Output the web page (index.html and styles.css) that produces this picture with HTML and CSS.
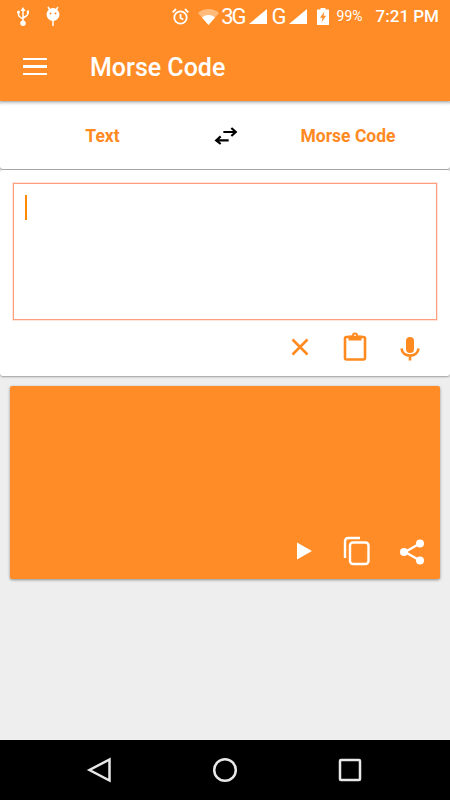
FILE: index.html
```html
<!DOCTYPE html>
<html lang="en">
<head>
  <meta charset="UTF-8">
  <meta name="viewport" content="width=device-width, initial-scale=1.0">
  <title>Morse Code</title>
  <link rel="stylesheet" href="styles.css">
</head>
<body>
  <div class="screen">
    <header class="app-header">
      <div class="status-bar">
        <svg class="status-usb" viewBox="0 0 12 19"><path d="M6 0 L8.500 4 H3.500 Z M1.500 3.500 A1.500 1.500 0 1 1 1.500 6.500 A1.500 1.500 0 1 1 1.500 3.500 Z M9.800 3.500 H12 V6.500 H9.800 Z M6 13.500 A2.700 2.700 0 1 1 6 19 A2.700 2.700 0 1 1 6 13.500 Z"/><path class="usb-line" d="M6 3 V15 M1.500 5 V7.500 Q1.500 9 3 10 L6 12 M10.800 5 V6.500 Q10.800 8 9.300 9 L6 11"/></svg>
        <svg class="status-droid" viewBox="0 0 14 19"><path class="usb-line" d="M2 0 L4 3 M12 0 L10 3 M7 12 V19"/><circle cx="7" cy="7.500" r="6.500"/><circle class="droid-eye" cx="4.500" cy="6.500" r="1"/><circle class="droid-eye" cx="9.500" cy="6.500" r="1"/></svg>
        <div class="status-right">
          <svg class="status-alarm" viewBox="0 0 17 17"><circle cx="8.500" cy="9.500" r="6.200"/><path d="M8.500 6 V10 L11.300 11.500 M0.700 4.300 L4 1 M16.300 4.300 L13 1"/></svg>
          <svg class="status-wifi" viewBox="0 0 21 17"><path class="wifi-back" d="M0 5 A15.500 15.500 0 0 1 21 5 L10.500 17 Z"/><path d="M4 9.500 A9.800 9.800 0 0 1 17 9.500 L10.500 17 Z"/></svg>
          <span class="status-net">3G</span>
          <svg class="status-signal" viewBox="0 0 18 15"><path d="M0 15 L18 0 V15 Z"/></svg>
          <span class="status-net status-net-g">G</span>
          <svg class="status-signal" viewBox="0 0 18 15"><path d="M0 15 L18 0 V15 Z"/></svg>
          <svg class="status-battery" viewBox="0 0 12 17"><path fill-rule="evenodd" d="M3.500 0 H8.500 V1.500 H12 V17 H0 V1.500 H3.500 Z M7.500 3.500 L3 9.800 H5.500 L4.500 14.500 L9 7.800 H6.500 Z"/></svg>
          <span class="status-percent">99%</span>
          <span class="status-time">7:21 PM</span>
        </div>
      </div>
      <div class="toolbar">
        <div class="menu-icon"><span></span><span></span><span></span></div>
        <h1 class="toolbar-title">Morse Code</h1>
      </div>
    </header>

    <div class="tabs-card">
      <div class="tab-label">Text</div>
      <svg class="swap-icon" viewBox="0 0 24 18"><path d="M1 14 H15 M6 9.500 L1 14 L6 18 M23 4.500 H9 M18 0 L23 4.500 L18 9"/></svg>
      <div class="tab-label">Morse Code</div>
    </div>

    <div class="input-card">
      <div class="input-box"><div class="caret"></div></div>
      <div class="input-actions">
        <svg class="action-icon" viewBox="0 0 24 24"><path class="stroke-line" d="M4.500 3.500 L19.500 18.500 M19.500 3.500 L4.500 18.500"/></svg>
        <svg class="action-icon" viewBox="0 0 24 24"><rect class="stroke-line" x="2" y="1" width="20" height="22.500" rx="1.500"/><path fill-rule="evenodd" d="M5.500 4.500 V-0.500 H9 A3 3 0 0 1 15 -0.500 H18.500 V4.500 Z M12 -1.500 A1.200 1.200 0 1 0 12 0.900 A1.200 1.200 0 1 0 12 -1.500 Z"/></svg>
        <svg class="action-icon" viewBox="0 0 24 24"><rect x="8" y="1" width="8" height="16" rx="4"/><path class="stroke-line" d="M3.500 12.500 C4.500 22 19.500 22 20.500 12.500 M12 19 V24.500"/></svg>
      </div>
    </div>

    <div class="output-card">
      <div class="output-actions">
        <svg class="output-icon" viewBox="0 0 24 24"><path d="M5 3.500 L20 12 L5 20.500 Z"/></svg>
        <svg class="output-icon" viewBox="0 0 24 24"><path class="stroke-white" d="M14 -1 H2.500 Q-1 -1 -1 2.500 V19"/><rect class="stroke-white" x="4" y="3.500" width="18.500" height="21.500" rx="3"/></svg>
        <svg class="output-icon" viewBox="0 0 24 24"><path class="stroke-white" d="M19 5 L5 13 L19 21"/><circle cx="20" cy="4.500" r="4"/><circle cx="4" cy="13" r="4"/><circle cx="20" cy="21.500" r="4"/></svg>
      </div>
    </div>

    <div class="spacer"></div>

    <nav class="nav-bar">
      <svg class="nav-icon" viewBox="0 0 24 24"><path d="M21.500 1.500 V22.500 L1.500 12 Z"/></svg>
      <svg class="nav-icon" viewBox="0 0 24 24"><circle cx="12" cy="12" r="10.800"/></svg>
      <svg class="nav-icon" viewBox="0 0 24 24"><rect x="2" y="2" width="20" height="20" rx="1"/></svg>
    </nav>
  </div>
</body>
</html>
```

FILE: styles.css
```css
* {
  box-sizing: border-box;
  margin: 0;
  padding: 0;
}

body {
  font-family: 'Roboto', sans-serif;
  background: #eeeeee;
}

svg {
  display: block;
  overflow: visible;
}

.screen {
  width: 450px;
  height: 800px;
  display: flex;
  flex-direction: column;
  overflow: hidden;
}

.app-header {
  height: 101px;
  background: #ff8c26;
  color: #ffffff;
  position: relative;
  z-index: 2;
  box-shadow: 0 2px 3px rgba(0, 0, 0, 0.25);
}

.status-bar {
  height: 32px;
  display: flex;
  align-items: center;
  padding-left: 17px;
  fill: #ffffff;
}

.status-usb {
  width: 12px;
  height: 19px;
}

.usb-line {
  fill: none;
  stroke: #ffffff;
  stroke-width: 1.500;
}

.status-droid {
  width: 14px;
  height: 19px;
  margin-left: 17px;
}

.droid-eye {
  fill: #ff8c26;
}

.status-right {
  margin-left: auto;
  display: flex;
  align-items: center;
  padding-right: 11px;
}

.status-alarm {
  width: 17px;
  height: 17px;
  fill: none;
  stroke: #ffffff;
  stroke-width: 1.800;
  margin-right: 9px;
}

.status-wifi {
  width: 21px;
  height: 17px;
}

.wifi-back {
  opacity: 0.4;
}

.status-net {
  font-size: 22px;
  letter-spacing: -2px;
  margin-left: 2px;
}

.status-net-g {
  margin-left: 5px;
}

.status-signal {
  width: 18px;
  height: 15px;
  margin-left: 4px;
}

.status-battery {
  width: 12px;
  height: 17px;
  margin-left: 10px;
}

.status-percent {
  font-size: 14px;
  margin-left: 8px;
}

.status-time {
  font-size: 17px;
  font-weight: 500;
  margin-left: 13px;
}

.toolbar {
  height: 69px;
  display: flex;
  align-items: center;
  padding-left: 23px;
}

.menu-icon {
  width: 24px;
  display: flex;
  flex-direction: column;
  gap: 5px;
}

.menu-icon span {
  height: 2.500px;
  background: #ffffff;
}

.toolbar-title {
  font-size: 25px;
  font-weight: 500;
  margin-left: 43px;
  margin-top: 2px;
}

.tabs-card {
  height: 67px;
  margin-top: 1px;
  background: #ffffff;
  border-radius: 3px;
  box-shadow: 0 1px 2px rgba(0, 0, 0, 0.4);
  display: grid;
  grid-template-columns: 205px 41px 204px;
  align-items: center;
  justify-items: center;
}

.tab-label {
  font-size: 17.500px;
  font-weight: 700;
  color: #ff8a1f;
}

.swap-icon {
  width: 22px;
  height: 16px;
  fill: none;
  stroke: #000000;
  stroke-width: 2.500;
}

.input-card {
  height: 206px;
  margin-top: 1px;
  background: #ffffff;
  border-radius: 3px;
  box-shadow: 0 1px 2px rgba(0, 0, 0, 0.35);
  padding: 13px 13px 0;
}

.input-box {
  height: 137px;
  border: 1px solid #ff9e7e;
  box-shadow: 0 0 0 1px rgba(255, 170, 130, 0.3);
  padding: 11px 11px;
}

.caret {
  width: 2px;
  height: 25px;
  background: #ff8a00;
}

.input-actions {
  display: flex;
  justify-content: flex-end;
  gap: 31px;
  padding: 16px 15px 0 0;
}

.action-icon {
  width: 24px;
  height: 24px;
  fill: #ff8a1f;
}

.stroke-line {
  fill: none;
  stroke: #ff8a1f;
  stroke-width: 2.600;
}

.output-card {
  height: 193px;
  margin: 10px 10px 0;
  background: #ff8c26;
  border-radius: 2px;
  box-shadow: 0 1px 3px rgba(0, 0, 0, 0.4);
  display: flex;
  align-items: flex-end;
  justify-content: flex-end;
}

.output-actions {
  display: flex;
  gap: 30px;
  padding: 0 16px 16px 0;
}

.output-icon {
  width: 24px;
  height: 24px;
  fill: #ffffff;
}

.stroke-white {
  fill: none;
  stroke: #ffffff;
  stroke-width: 2.400;
}

.spacer {
  flex: 1;
}

.nav-bar {
  height: 60px;
  background: #000000;
  display: flex;
  justify-content: center;
  align-items: center;
  gap: 101px;
}

.nav-icon {
  width: 24px;
  height: 24px;
  fill: none;
  stroke: #e8e8e8;
  stroke-width: 2.500;
}
```
